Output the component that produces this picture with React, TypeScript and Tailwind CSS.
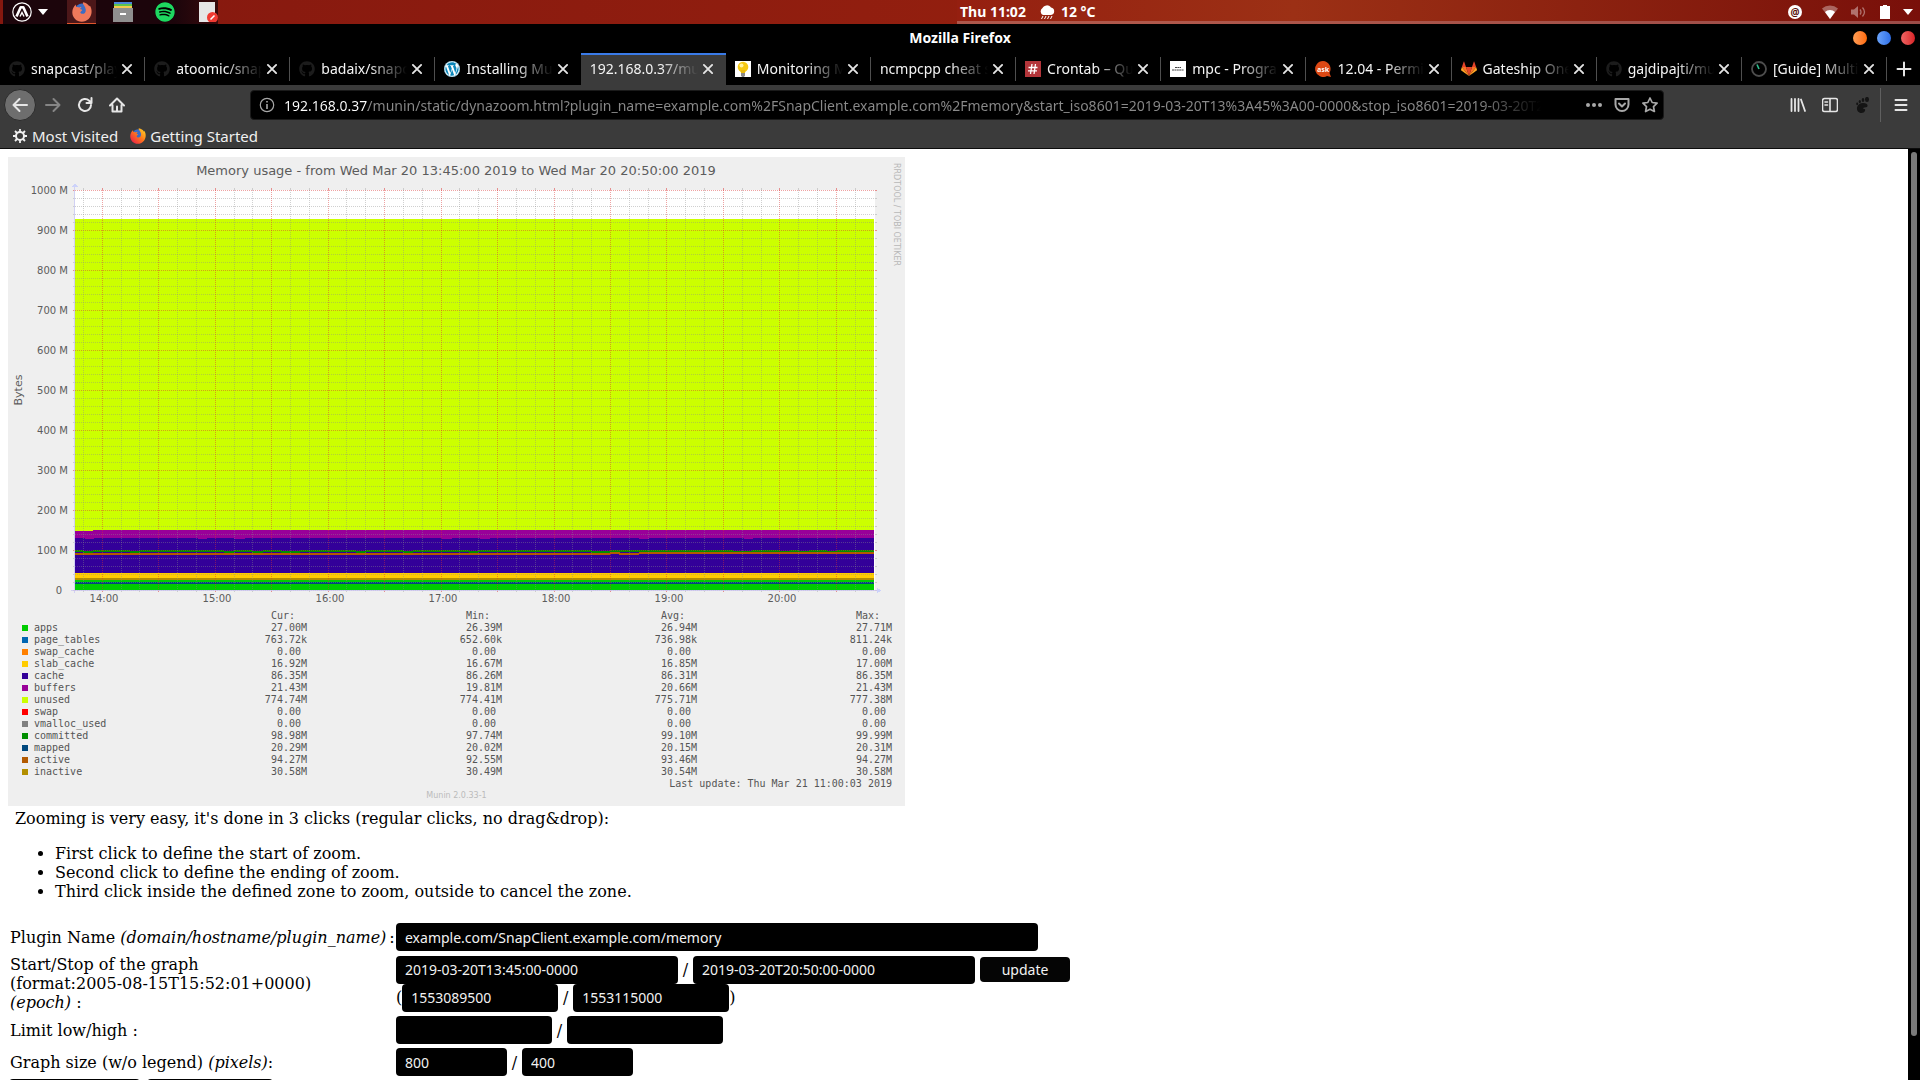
import type { ReactNode } from 'react';
import { FaGithub, FaSpotify, FaWordpress } from 'react-icons/fa';

const UI = 'font-["Noto_Sans","Open_Sans",sans-serif]';

/* ---------- icons ---------- */

function Firefox({ className, flat }: { className: string; flat?: boolean }) {
  return (
    <svg viewBox="0 0 20 20" className={className} aria-hidden="true">
      <defs>
        <linearGradient id="fx" x1="1" y1="0" x2="0" y2="1">
          <stop offset="0" stopColor="#ffe226" />
          <stop offset="0.45" stopColor="#ff7a1c" />
          <stop offset="1" stopColor="#e8104e" />
        </linearGradient>
      </defs>
      <circle cx="10" cy="8.500" r="7" fill="#3b6cc4" />
      <path
        d="M4 2.500c-.3 1.200 0 2 .5 2.600 1-.4 2-.2 3 .5.6-.5 1.500-.6 2-.4-.8.500-1.300 1.200-1.300 1.900.5.500 1.600.4 2 .8 0 .8-1.500 1.300-1.900 2.300.3 1.800 3 2.300 4.600.7 1.400-1.500 1.200-4.600-.8-7.400C11.300 2.500 10.500 1.500 11 .2c3 .4 5.200 2 6.300 4.100.3.200.5-.3.500-.8 1.400 2 1.900 4.300 1.800 6.500-.2 5.400-4.500 9.800-9.800 9.800C4.500 19.800.3 15.600.3 10.300.3 7.200 1.700 4.300 4 2.500z"
        fill={flat ? '#f0795b' : 'url(#fx)'}
      />
    </svg>
  );
}

function DistroLogo() {
  return (
    <svg viewBox="0 0 20 20" className="size-5" fill="none" stroke="#fff" aria-hidden="true">
      <circle cx="10" cy="10" r="9.200" strokeWidth="1.200" />
      <path d="M4.500 14.500 8.700 5.200h2.600l4.200 9.300" strokeWidth="2.600" strokeLinejoin="round" />
      <path d="M8 14.500 10 10.500l2 4" strokeWidth="1.400" />
    </svg>
  );
}

function Files() {
  return (
    <svg viewBox="0 0 20 20" className="size-5" aria-hidden="true">
      <path d="M1 0h18v3H1z" fill="#4a86d8" />
      <path d="M1 2h18v2H1z" fill="#5fc24c" />
      <path d="M1 4h18v2H1z" fill="#f2c94c" />
      <path d="M0 6h20v14H0z" fill="#8f8f8f" />
      <path d="M7 11h6v2H7z" fill="#fff" />
    </svg>
  );
}

function Editor() {
  return (
    <svg viewBox="0 0 20 20" className="size-5" aria-hidden="true">
      <path d="M1 0h16v20H1z" fill="#e6e6e6" />
      <circle cx="14.500" cy="15.500" r="5.500" fill="#f03a32" />
      <path d="m12.500 17.500 4-4" stroke="#fff" strokeWidth="1.600" />
    </svg>
  );
}

function Caret() {
  return (
    <svg viewBox="0 0 10 6" className="h-1.5 w-2.5" fill="#fff" aria-hidden="true">
      <path d="M0 0h10L5 6z" />
    </svg>
  );
}

function Bulb() {
  return (
    <svg viewBox="0 0 16 16" className="size-4" aria-hidden="true">
      <path d="M0 0h16v16H0z" fill="#fff" />
      <circle cx="8" cy="6" r="5.300" fill="#f6c913" />
      <path d="M5.500 9h5l-.5 3H6z" fill="#e8b90c" />
      <circle cx="6.500" cy="4.500" r="2" fill="#fff3a0" />
      <path d="M6 12h4v2.500L9 16H7l-1-1.500z" fill="#8a8a8a" />
    </svg>
  );
}

function Gitlab() {
  return (
    <svg viewBox="0 0 16 16" className="size-4" aria-hidden="true">
      <path d="M8 15 5 6h6z" fill="#e24329" />
      <path d="M8 15 5 6H.900zM8 15l3-9h4.100z" fill="#fc6d26" />
      <path d="M.900 6 0 8.800c0 .3 0 .6.300.800L8 15zM15.100 6l.9 2.800c0 .3 0 .6-.3.800L8 15z" fill="#fca326" />
      <path d="M.900 6H5L3.200.800c-.1-.3-.4-.3-.5 0zM15.100 6H11L12.800.800c.1-.3.4-.3.500 0z" fill="#e24329" />
    </svg>
  );
}

function Ask() {
  return (
    <svg viewBox="0 0 16 16" className="size-4" aria-hidden="true">
      <path d="M8 0a8 8 0 1 0 4 15l4 1-1.500-4A8 8 0 0 0 8 0z" fill="#dd4814" />
      <text x="8" y="11" textAnchor="middle" fontSize="7" fontWeight="700" fill="#fff">
        ask
      </text>
    </svg>
  );
}

function Crontab() {
  return (
    <svg viewBox="0 0 16 16" className="size-4" aria-hidden="true">
      <path d="M0 0h16v16H0z" fill="#b3353a" />
      <path d="m7 3-1.500 10M10.500 3 9 13M3.500 6.500h9M3 9.800h9" stroke="#fff" strokeWidth="1.300" />
    </svg>
  );
}

function Mpc() {
  return (
    <svg viewBox="0 0 16 16" className="size-4" aria-hidden="true">
      <path d="M0 0h16v16H0z" fill="#fff" />
      <path d="M5 6.500h6M2 9h12" stroke="#444" strokeDasharray="2 .4" />
    </svg>
  );
}

function Gauge() {
  return (
    <svg viewBox="0 0 16 16" className="size-4" fill="none" aria-hidden="true">
      <circle cx="8" cy="8" r="7" stroke="#4d4d4d" strokeWidth="1.800" />
      <path d="M8 8 6 3.500" stroke="#2fbf8f" strokeWidth="1.600" />
    </svg>
  );
}

function Line({ d, w = 2, className = 'size-4' }: { d: string; w?: number; className?: string }) {
  return (
    <svg viewBox="0 0 16 16" className={className} fill="none" stroke="currentColor" strokeWidth={w} strokeLinecap="round" strokeLinejoin="round" aria-hidden="true">
      <path d={d} />
    </svg>
  );
}

/* ---------- desktop panel ---------- */

function Panel() {
  return (
    <header className={`${UI} relative flex h-6 shrink-0 items-center bg-linear-to-r from-[#85180f] via-[#95200f] via-60% to-[#7a100b] text-[14px] font-bold text-white`}>
      <div className="ml-[3px] flex h-full w-[215px] items-center bg-linear-to-r from-[#1c050b] from-80% to-[#3a0a0b]">
        <button aria-label="Applications" className="ml-[9px] flex items-center gap-1.5">
          <DistroLogo />
          <Caret />
        </button>
        <button aria-label="Firefox" className="ml-[19px] flex h-full w-8 items-center justify-center border-b border-[#e0552d] bg-[#4c1719]">
          <Firefox className="size-5" flat />
        </button>
        <button aria-label="Files" className="ml-[17px]">
          <Files />
        </button>
        <button aria-label="Spotify" className="ml-[22px] rounded-full bg-black">
          <FaSpotify className="size-5 text-[#1ed760]" />
        </button>
        <button aria-label="Text editor" className="ml-[23px]">
          <Editor />
        </button>
      </div>
      <div className="absolute inset-y-0 right-0 left-[957px] flex items-center border-b-3 border-white/25 bg-linear-to-r from-[#951f10] via-[#9c3015] via-35% to-[#790f0a] bg-clip-padding pr-[7px] pl-[3px]">
        <button className="mt-0.5 whitespace-nowrap">Thu 11:02</button>
        <svg viewBox="0 0 16 16" className="mt-0.5 ml-[13px] size-4" fill="#fff" aria-hidden="true">
          <path d="M4 11a4 4 0 0 1-.5-7A5 5 0 0 1 12 3.500 3.800 3.800 0 0 1 12 11z" />
          <path d="m4 12-1.500 3M7 12l-1.500 3M10 12l-1.500 3M13 12l-1.500 3" stroke="#fff" />
        </svg>
        <span className="mt-0.5 ml-1.5 whitespace-nowrap">12 °C</span>
        <div className="mt-0.5 ml-auto flex items-center">
          <span className="flex size-3.5 items-center justify-center rounded-full bg-white text-[10px] leading-none font-bold text-[#5a0d08]">@</span>
          <svg viewBox="0 0 16 14" className="ml-5 h-3.5 w-4" aria-hidden="true">
            <path d="M8 14 0 3.500a12 12 0 0 1 16 0z" fill="#fff" opacity=".35" />
            <path d="M8 14 3 7a7 7 0 0 1 10 0z" fill="#fff" />
          </svg>
          <svg viewBox="0 0 16 14" className="ml-[13px] h-3.5 w-4" fill="none" stroke="#fff" strokeWidth="1.300" opacity=".4" aria-hidden="true">
            <path d="M0 4.500h3L7 1v12L3 9.500H0z" fill="#fff" stroke="none" />
            <path d="M9 4.500q2 2.500 0 5M11.500 2.500q4 4.500 0 9" />
          </svg>
          <svg viewBox="0 0 10 14" className="ml-[13px] h-3.5 w-2.5" fill="#fff" aria-hidden="true">
            <path d="M0 1h3V0h4v1h3v13H0z" />
          </svg>
          <span className="ml-[13px]">
            <Caret />
          </span>
        </div>
      </div>
    </header>
  );
}

/* ---------- browser chrome ---------- */

const cat = <FaGithub className="size-4 text-[#1c1c1c]" />;

const tabs: { title: string; icon?: ReactNode; active?: boolean }[] = [
  { title: 'snapcast/player_setup', icon: cat },
  { title: 'atoomic/snapcast', icon: cat },
  { title: 'badaix/snapcast', icon: cat },
  {
    title: 'Installing Munin',
    icon: (
      <span className="block rounded-full bg-white">
        <FaWordpress className="size-4 text-[#0a86ba]" />
      </span>
    ),
  },
  { title: '192.168.0.37/munin/', active: true },
  { title: 'Monitoring Munin', icon: <Bulb /> },
  { title: 'ncmpcpp cheat sheet' },
  { title: 'Crontab – Quick', icon: <Crontab /> },
  { title: 'mpc - Program', icon: <Mpc /> },
  { title: '12.04 - Permissions', icon: <Ask /> },
  { title: 'Gateship One', icon: <Gitlab /> },
  { title: 'gajdipajti/munin', icon: cat },
  { title: '[Guide] Multiroom', icon: <Gauge /> },
];

function TabStrip() {
  return (
    <div className="flex h-8 items-stretch bg-black">
      <div role="tablist" className="flex min-w-0 flex-1">
        {tabs.map((t, i) => (
          <div
            key={t.title}
            className={
              t.active
                ? 'flex min-w-0 flex-1 items-center border-t-2 border-[#3a7be8] bg-[#3b3b3b] pr-3 pb-0.5 pl-[9px]'
                : 'relative flex min-w-0 flex-1 items-center pr-3 pl-[9px]'
            }
          >
            <button role="tab" aria-selected={!!t.active} className="flex min-w-0 flex-1 items-center gap-1.5 overflow-hidden text-[14px] leading-5 whitespace-nowrap text-[#f4f4f4] [mask-image:linear-gradient(to_right,black_65%,transparent)]">
              {t.icon && <span className="shrink-0">{t.icon}</span>}
              {t.title}
            </button>
            <button aria-label={`Close ${t.title}`} className="ml-1 text-[#e4e4e4]">
              <Line d="m2.500 2.500 11 11m0-11-11 11" className="size-3" w={2.500} />
            </button>
            {!t.active && i !== 3 && <span className="absolute top-1 right-0 h-6 w-px bg-[#4f4f4f]" />}
          </div>
        ))}
      </div>
      <button aria-label="New tab" className="flex w-[33px] items-center justify-center text-[#e4e4e4]">
        <Line d="M8 1.500v13M1.500 8h13" w={2} />
      </button>
    </div>
  );
}

const URL_TEXT =
  '192.168.0.37/munin/static/dynazoom.html?plugin_name=example.com%2FSnapClient.example.com%2Fmemory&start_iso8601=2019-03-20T13%3A45%3A00-0000&stop_iso8601=2019-03-20T20%3A50%3A00-0000';

function NavBar() {
  return (
    <div className="flex h-10 items-center pr-[11px] pl-1 text-[#e6e6e6]">
      <button aria-label="Back" className="flex size-8 items-center justify-center rounded-full border border-[#2c2c2c] bg-[#6e6e6e]">
        <Line d="M15 8H1.500M7.500 2l-6 6 6 6" />
      </button>
      <button aria-label="Forward" className="ml-[9px] text-[#858585]">
        <Line d="M1 8h13.500M8.500 2l6 6-6 6" />
      </button>
      <button aria-label="Reload" className="ml-4">
        <Line d="M14 8a6 6 0 1 1-1.800-4.300L14 5.500M14.500 1v5h-5" />
      </button>
      <button aria-label="Home" className="ml-4">
        <Line d="M1 8.500 8 1.500l7 7M3.500 8v6.500h9V8M8 14V9.500" />
      </button>
      <div className="ml-[125px] flex h-[30px] min-w-0 flex-1 items-center rounded border border-[#1a1a1a] bg-black pr-[5px] pl-2 text-[#a8a8a8]">
        <svg viewBox="0 0 16 16" className="size-4 shrink-0" fill="none" stroke="currentColor" strokeWidth="1.200" aria-hidden="true">
          <circle cx="8" cy="8" r="6.700" />
          <path d="M8 7v5M8 4v1.500" strokeWidth="1.600" />
        </svg>
        <input
          aria-label="Address"
          defaultValue={URL_TEXT}
          className="ml-[9px] w-0 min-w-0 flex-1 bg-[linear-gradient(to_right,#fff_0_84px,#8a8a8a_84px_94%,transparent_99%)] bg-clip-text text-[14px] text-transparent outline-none"
        />
        <button aria-label="Page actions" className="ml-8">
          <svg viewBox="0 0 16 4" className="h-1 w-4" fill="currentColor" aria-hidden="true">
            <circle cx="2" cy="2" r="2" />
            <circle cx="8" cy="2" r="2" />
            <circle cx="14" cy="2" r="2" />
          </svg>
        </button>
        <button aria-label="Save to Pocket" className="ml-3">
          <Line d="M1.500 2h13v5.500a6.500 6.500 0 0 1-13 0zM5 6.500l3 3 3-3" />
        </button>
        <button aria-label="Bookmark" className="ml-3">
          <Line d="m8 1 2.200 4.500 4.900.7-3.600 3.400.9 4.900L8 12.200l-4.400 2.300.9-4.900L.900 6.200l4.900-.7z" w={1.700} />
        </button>
      </div>
      <button aria-label="Library" className="ml-[126px]">
        <Line d="M1.500 2v12M5 2v12M8.500 2v12M11 2.500l4 11.500" w={1.800} />
      </button>
      <button aria-label="Sidebars" className="ml-4">
        <Line d="M2.500 1.500h11a2 2 0 0 1 2 2v9a2 2 0 0 1-2 2h-11a2 2 0 0 1-2-2v-9a2 2 0 0 1 2-2zM8 2v12M3 5h2.500M3 8h2.500" w={1.600} />
      </button>
      <button aria-label="GNOME Shell integration" className="ml-4">
        <svg viewBox="0 0 16 16" className="size-4" fill="#141414" aria-hidden="true">
          <path d="M9 6c3.500 0 5 1.500 4.500 3.200-.5 1.300-2.500 1-3.500 1.300-1.200.4-1 1.500 0 1.500s1.500.5 1 1.800C10.500 15.300 9 16 7.500 16 4.500 16 2.500 13.500 3 10.500 3.500 8 6 6 9 6z" />
          <ellipse cx="13" cy="2.500" rx="2" ry="2.600" />
          <ellipse cx="9" cy="3" rx="1.300" ry="1.900" />
          <ellipse cx="5.800" cy="4.600" rx="1.100" ry="1.600" />
          <ellipse cx="3.200" cy="6.800" rx="1" ry="1.400" />
        </svg>
      </button>
      <span className="ml-2.5 h-[34px] w-px bg-[#606060]" />
      <button aria-label="Menu" className="ml-3">
        <Line d="M2.500 3h11M2.500 8h11M2.500 13h11" w={2} />
      </button>
    </div>
  );
}

function Bookmarks() {
  return (
    <nav className="flex h-[23px] items-center pb-0.5 pl-3 text-[15px] leading-5 text-[#f0f0f0]">
      <a href="#most-visited" className="flex items-center gap-1">
        <svg viewBox="0 0 16 16" className="size-4" fill="none" stroke="currentColor" aria-hidden="true">
          <circle cx="8" cy="8" r="4" strokeWidth="2" />
          <path d="M8 1v3M8 12v3M1 8h3M12 8h3M3 3l2 2M11 11l2 2M3 13l2-2M11 5l2-2" strokeWidth="1.800" />
        </svg>
        Most Visited
      </a>
      <a href="#getting-started" className="ml-3 flex items-center gap-1">
        <Firefox className="size-4" />
        Getting Started
      </a>
    </nav>
  );
}

/* ---------- memory graph ---------- */

const PX_PER_MIN = 800 / 425;
const vLines = Array.from({ length: 42 }, (_, i) => {
  const t = 5 + i * 10;
  return { x: Math.floor(66 + t * PX_PER_MIN) + 0.5, major: (t + 15) % 30 === 0 };
});
const hLines = Array.from({ length: 51 }, (_, i) => ({ y: 33.5 + i * 8, major: i % 5 === 0 }));

const purpleDips = [[77, 9], [190, 9], [226, 11], [434, 10], [472, 10], [631, 10], [736, 9]];
const committedDips = [[75, 10], [122, 10], [216, 10], [244, 11], [273, 19], [348, 10], [395, 10], [461, 9], [583, 19]];
const committedThin = [[725, 19], [772, 10], [791, 10], [819, 10]];

function Plot() {
  return (
    <svg viewBox="0 0 897 453" width="897" height="453" className="block" shapeRendering="crispEdges" role="img" aria-label="Memory usage plot">
      <g className='font-["DejaVu_Sans",sans-serif]' fill="#5c5c5c">
        <text x="448" y="18" textAnchor="middle" fontSize="13">
          Memory usage - from Wed Mar 20 13:45:00 2019 to Wed Mar 20 20:50:00 2019
        </text>
        <text transform="translate(14 233) rotate(-90)" textAnchor="middle" fontSize="11">
          Bytes
        </text>
        <text transform="translate(886 6) rotate(90)" fontSize="8" fill="#b8b8b8">
          RRDTOOL / TOBI OETIKER
        </text>
        {Array.from({ length: 10 }, (_, i) => (
          <text key={i} x="60" y={37 + i * 40} textAnchor="end" fontSize="10">
            {1000 - i * 100} M
          </text>
        ))}
        <text x="54" y="437" textAnchor="end" fontSize="10">
          0
        </text>
        {[14, 15, 16, 17, 18, 19, 20].map((h, i) => (
          <text key={h} x={96 + i * 113} y="445" textAnchor="middle" fontSize="10">
            {h}:00
          </text>
        ))}
      </g>

      <rect x="67" y="33" width="800" height="400" fill="#fff" />
      <rect x="67" y="62" width="799" height="312" fill="#ccff00" />
      <rect x="67" y="374" width="799" height="7" fill="#990099" />
      <rect x="85" y="373" width="781" height="1" fill="#990099" />
      <rect x="67" y="381" width="799" height="35" fill="#330099" />
      {purpleDips.map(([x, w]) => (
        <rect key={x} x={x} y="381" width={w} height="1" fill="#990099" />
      ))}
      <rect x="67" y="416" width="799" height="5" fill="#ffcc00" />
      <rect x="67" y="421" width="799" height="12" fill="#00cc00" />
      <rect x="67" y="393" width="799" height="2" fill="#008f00" />
      {committedDips.map(([x, w]) => (
        <g key={x}>
          <rect x={x} y="393" width={w} height="1" fill="#330099" />
          <rect x={x} y="394" width={w} height="2" fill="#008f00" />
        </g>
      ))}
      {committedThin.map(([x, w]) => (
        <rect key={x} x={x} y="393" width={w} height="1" fill="#330099" />
      ))}
      <rect x="67" y="396" width="535" height="2" fill="#b35a00" />
      <rect x="602" y="395" width="10" height="2" fill="#b35a00" />
      <rect x="611" y="396" width="20" height="2" fill="#b35a00" />
      <rect x="631" y="395" width="235" height="2" fill="#b35a00" />
      <rect x="67" y="421" width="799" height="2" fill="#b38f00" />
      <rect x="67" y="425" width="799" height="2" fill="#00487d" />

      {hLines.map(({ y, major }) => (
        <g key={y} stroke={major ? '#dc3232' : '#8c8c8c'}>
          <path d={`M67 ${y}H867`} strokeDasharray="1 1" opacity={major ? 0.45 : 0.4} />
          <path d={`M65 ${y}h2M867 ${y}h2`} opacity={major ? 0.5 : 0.35} />
        </g>
      ))}
      {vLines.map(({ x, major }) => (
        <g key={x} stroke={major ? '#dc3232' : '#8c8c8c'}>
          <path d={`M${x} 33V433`} strokeDasharray="1 1" opacity={major ? 0.45 : 0.4} />
          <path d={`M${x} 31v2M${x} 433v2`} opacity={major ? 0.5 : 0.35} />
        </g>
      ))}
      <path d="M66.500 29v407M63 433.500h808" stroke="#ccccf4" opacity=".85" />
      <path d="m67 26 3 4h-6zM873 433.500l-4-3v6z" fill="#ccd2fa" />
    </svg>
  );
}

const legend = [
  { c: 'bg-[#00cc00]', n: 'apps', v: ['27.00M', '26.39M', '26.94M', '27.71M'] },
  { c: 'bg-[#0066b3]', n: 'page_tables', v: ['763.72k', '652.60k', '736.98k', '811.24k'] },
  { c: 'bg-[#ff8000]', n: 'swap_cache', v: ['0.00 ', '0.00 ', '0.00 ', '0.00 '] },
  { c: 'bg-[#ffcc00]', n: 'slab_cache', v: ['16.92M', '16.67M', '16.85M', '17.00M'] },
  { c: 'bg-[#330099]', n: 'cache', v: ['86.35M', '86.26M', '86.31M', '86.35M'] },
  { c: 'bg-[#990099]', n: 'buffers', v: ['21.43M', '19.81M', '20.66M', '21.43M'] },
  { c: 'bg-[#ccff00]', n: 'unused', v: ['774.74M', '774.41M', '775.71M', '777.38M'] },
  { c: 'bg-[#ff0000]', n: 'swap', v: ['0.00 ', '0.00 ', '0.00 ', '0.00 '] },
  { c: 'bg-[#808080]', n: 'vmalloc_used', v: ['0.00 ', '0.00 ', '0.00 ', '0.00 '] },
  { c: 'bg-[#008f00]', n: 'committed', v: ['98.98M', '97.74M', '99.10M', '99.99M'] },
  { c: 'bg-[#00487d]', n: 'mapped', v: ['20.29M', '20.02M', '20.15M', '20.31M'] },
  { c: 'bg-[#b35a00]', n: 'active', v: ['94.27M', '92.55M', '93.46M', '94.27M'] },
  { c: 'bg-[#b38f00]', n: 'inactive', v: ['30.58M', '30.49M', '30.54M', '30.58M'] },
];

function Graph() {
  return (
    <figure className='w-[897px] bg-[#efefef] pb-1 font-["DejaVu_Sans_Mono",monospace] text-[10px] leading-3 text-[#555]'>
      <Plot />
      <div className="pr-[13px] pl-[14px]">
        <table className="w-full table-fixed whitespace-pre">
          <colgroup>
            <col className="w-[90px]" />
            <col />
            <col />
            <col />
            <col />
          </colgroup>
          <thead>
            <tr>
              <th className="p-0" aria-label="Series" />
              {['Cur:  ', 'Min:  ', 'Avg:  ', 'Max:  '].map((h) => (
                <th key={h} scope="col" className="p-0 text-right font-normal">
                  {h}
                </th>
              ))}
            </tr>
          </thead>
          <tbody>
            {legend.map((r) => (
              <tr key={r.n}>
                <th scope="row" className="p-0 text-left font-normal">
                  <span className="flex items-center gap-1.5">
                    <span className={`size-1.5 ${r.c}`} />
                    {r.n}
                  </span>
                </th>
                {r.v.map((v, i) => (
                  <td key={i} className="p-0 text-right">
                    {v}
                  </td>
                ))}
              </tr>
            ))}
          </tbody>
        </table>
        <p className="text-right">Last update: Thu Mar 21 11:00:03 2019</p>
      </div>
      <figcaption className='text-center font-["DejaVu_Sans",sans-serif] text-[8px] text-[#bbb]'>Munin 2.0.33-1</figcaption>
    </figure>
  );
}

/* ---------- zoom form ---------- */

function Field({ label, value, className }: { label: string; value?: string; className: string }) {
  return (
    <input
      type="text"
      aria-label={label}
      defaultValue={value}
      className={`${UI} ${className} h-7 rounded bg-black px-[9px] text-[14px] text-[#f2f2f2]`}
    />
  );
}

const Slash = () => <span className="w-[15px] text-center">/</span>;

function Row({ label, children }: { label: ReactNode; children: ReactNode }) {
  return (
    <div className="flex items-center">
      <div className="w-[386px] shrink-0 whitespace-nowrap">{label}</div>
      <div>{children}</div>
    </div>
  );
}

function ZoomForm() {
  const action = `${UI} h-7 rounded bg-black text-[14px] text-[#f2f2f2]`;
  return (
    <form className="mt-[22px] flex flex-col gap-1 pl-0.5" onSubmit={(e) => e.preventDefault()}>
      <Row
        label={
          <span className="flex gap-[3px]">
            <span>
              Plugin Name <i>(domain/hostname/plugin_name)</i>
            </span>
            <span>:</span>
          </span>
        }
      >
        <Field label="Plugin name" value="example.com/SnapClient.example.com/memory" className="block w-[642px]" />
      </Row>
      <Row
        label={
          <>
            Start/Stop of the graph
            <br />
            (format:2005-08-15T15:52:01+0000)
            <br />
            <i>(epoch)</i> :
          </>
        }
      >
        <div className="flex items-center">
          <Field label="Start" value="2019-03-20T13:45:00-0000" className="w-[282px]" />
          <Slash />
          <Field label="Stop" value="2019-03-20T20:50:00-0000" className="w-[282px]" />
          <button className={`${UI} ml-[5px] h-[25px] w-[90px] rounded bg-[#050505] text-[14px] text-[#f2f2f2]`}>update</button>
        </div>
        <div className="flex items-center">
          (<Field label="Start epoch" value="1553089500" className="w-[156px]" />
          <Slash />
          <Field label="Stop epoch" value="1553115000" className="w-[156px]" />)
        </div>
      </Row>
      <Row label="Limit low/high :">
        <div className="flex items-center">
          <Field label="Lower limit" className="w-[156px]" />
          <Slash />
          <Field label="Upper limit" className="w-[156px]" />
        </div>
      </Row>
      <Row
        label={
          <>
            Graph size (w/o legend) <i>(pixels)</i>:
          </>
        }
      >
        <div className="flex items-center">
          <Field label="Width" value="800" className="w-[111px]" />
          <Slash />
          <Field label="Height" value="400" className="w-[111px]" />
        </div>
      </Row>
      <div className="-mt-px -ml-px flex gap-[7px]">
        <button className={`${action} w-[131px]`} aria-label="Zoom out" />
        <button className={`${action} w-[126px]`} aria-label="Reset" />
      </div>
    </form>
  );
}

export default function App() {
  return (
    <div className="flex h-screen flex-col overflow-hidden bg-black">
      <Panel />
      <div className={`${UI} shrink-0`}>
        <div className="relative flex h-[29px] items-center justify-center bg-black pb-0.5 text-[14px] font-bold text-white">
          Mozilla Firefox
          <div className="absolute right-[5px] flex gap-2.5">
            <button aria-label="Minimize" className="size-3.5 rounded-full bg-linear-to-r from-[#ff9d52] to-[#ff6a00]" />
            <button aria-label="Maximize" className="size-3.5 rounded-full bg-linear-to-r from-[#6ba4fb] to-[#2f6fe8]" />
            <button aria-label="Close" className="size-3.5 rounded-full bg-linear-to-r from-[#ee6464] to-[#d81f26]" />
          </div>
        </div>
        <TabStrip />
        <div className="border-b border-[#0c0c0c] bg-[#3b3b3b]">
          <NavBar />
          <Bookmarks />
        </div>
      </div>
      <div className="flex min-h-0 flex-1">
        <main className='min-w-0 flex-1 overflow-hidden bg-white px-2 pt-2 font-["DejaVu_Serif",serif] text-[16px] leading-[19px] text-black'>
          <Graph />
          <p className="mt-[3px] pl-[7px]">Zooming is very easy, it's done in 3 clicks (regular clicks, no drag&amp;drop):</p>
          <ul className="mt-4 list-disc pl-[47px]">
            <li>First click to define the start of zoom.</li>
            <li>Second click to define the ending of zoom.</li>
            <li>Third click inside the defined zone to zoom, outside to cancel the zone.</li>
          </ul>
          <ZoomForm />
        </main>
        <div className="flex w-3 shrink-0 justify-center bg-black pt-[3px] pb-11">
          <div className="w-1.5 rounded-full bg-[#7a7a7a]" />
        </div>
      </div>
    </div>
  );
}
